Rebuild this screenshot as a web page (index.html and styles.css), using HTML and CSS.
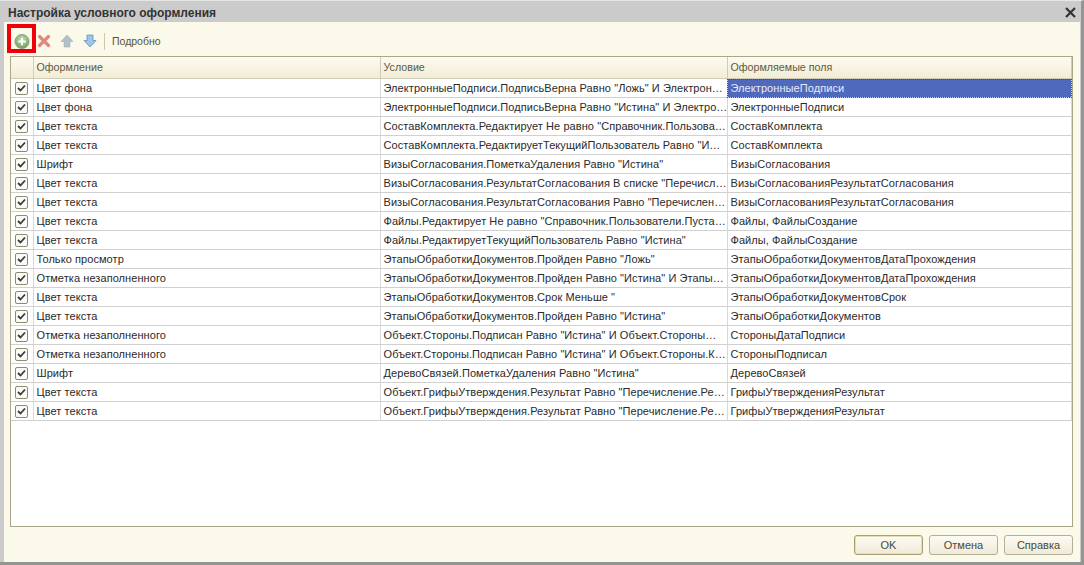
FILE: index.html
```html
<!DOCTYPE html>
<html lang="ru">
<head>
  <meta charset="UTF-8" />
  <meta name="viewport" content="width=device-width, initial-scale=1.0" />
  <title>Настройка условного оформления</title>
  <link rel="stylesheet" href="styles.css">
</head>
<body>
  <div class="window">
    <div class="titlebar">
      <div class="title">Настройка условного оформления</div>
      <svg class="close" width="11" height="11" viewBox="0 0 11 11"><path d="M1 1l9 9M10 1l-9 9" stroke="#333" stroke-width="2.2" fill="none"/></svg>
    </div>

    <div class="content">
      <div class="toolbar">
        <div class="marker"></div>
        <div class="tool tool-add">
          <svg width="17" height="17" viewBox="0 0 17 17">
            <defs><radialGradient id="g" cx="50%" cy="35%" r="65%"><stop offset="0" stop-color="#c6dfb2"/><stop offset="1" stop-color="#6f9f5c"/></radialGradient></defs>
            <circle cx="8.500" cy="8.500" r="7.500" fill="url(#g)" stroke="#86a67a"/>
            <path d="M8.500 4.500v8M4.500 8.500h8" stroke="#fff" stroke-width="2.200"/>
          </svg>
        </div>
        <div class="tool">
          <svg width="14" height="14" viewBox="0 0 14 14"><path d="M2.500 2.500l9 9M11.500 2.500l-9 9" stroke="#e08880" stroke-width="3.200" stroke-linecap="round"/></svg>
        </div>
        <div class="tool">
          <svg width="14" height="14" viewBox="0 0 14 14"><path d="M7 1l6 6.500h-3V13H4V7.500H1z" fill="#b4c0c8" stroke="#a5b2ba" stroke-width=".6"/></svg>
        </div>
        <div class="tool">
          <svg width="14" height="14" viewBox="0 0 14 14"><path d="M7 13L1 6.500h3V1h6v5.500h3z" fill="#9cc6ec" stroke="#5f8fbf" stroke-width=".8"/></svg>
        </div>
        <div class="divider"></div>
        <div class="tool-text">Подробно</div>
      </div>

      <div class="grid">
        <table>
          <colgroup>
            <col class="col-check">
            <col class="col-style">
            <col class="col-cond">
            <col>
          </colgroup>
          <thead>
            <tr><th></th><th>Оформление</th><th>Условие</th><th>Оформляемые поля</th></tr>
          </thead>
          <tbody id="rows"></tbody>
        </table>
      </div>

      <div class="buttons">
        <button class="btn btn-default">OK</button>
        <button class="btn">Отмена</button>
        <button class="btn">Справка</button>
      </div>
    </div>
  </div>

  <script>
    const rows = [
      ['Цвет фона', 'ЭлектронныеПодписи.ПодписьВерна Равно "Ложь" И Электрон…', 'ЭлектронныеПодписи'],
      ['Цвет фона', 'ЭлектронныеПодписи.ПодписьВерна Равно "Истина" И Электро…', 'ЭлектронныеПодписи'],
      ['Цвет текста', 'СоставКомплекта.Редактирует Не равно "Справочник.Пользова…', 'СоставКомплекта'],
      ['Цвет текста', 'СоставКомплекта.РедактируетТекущийПользователь Равно "И…', 'СоставКомплекта'],
      ['Шрифт', 'ВизыСогласования.ПометкаУдаления Равно "Истина"', 'ВизыСогласования'],
      ['Цвет текста', 'ВизыСогласования.РезультатСогласования В списке "Перечисл…', 'ВизыСогласованияРезультатСогласования'],
      ['Цвет текста', 'ВизыСогласования.РезультатСогласования Равно "Перечислен…', 'ВизыСогласованияРезультатСогласования'],
      ['Цвет текста', 'Файлы.Редактирует Не равно "Справочник.Пользователи.Пуста…', 'Файлы, ФайлыСоздание'],
      ['Цвет текста', 'Файлы.РедактируетТекущийПользователь Равно "Истина"', 'Файлы, ФайлыСоздание'],
      ['Только просмотр', 'ЭтапыОбработкиДокументов.Пройден Равно "Ложь"', 'ЭтапыОбработкиДокументовДатаПрохождения'],
      ['Отметка незаполненного', 'ЭтапыОбработкиДокументов.Пройден Равно "Истина" И Этапы…', 'ЭтапыОбработкиДокументовДатаПрохождения'],
      ['Цвет текста', 'ЭтапыОбработкиДокументов.Срок Меньше "', 'ЭтапыОбработкиДокументовСрок'],
      ['Цвет текста', 'ЭтапыОбработкиДокументов.Пройден Равно "Истина"', 'ЭтапыОбработкиДокументов'],
      ['Отметка незаполненного', 'Объект.Стороны.Подписан Равно "Истина" И Объект.Стороны…', 'СтороныДатаПодписи'],
      ['Отметка незаполненного', 'Объект.Стороны.Подписан Равно "Истина" И Объект.Стороны.К…', 'СтороныПодписал'],
      ['Шрифт', 'ДеревоСвязей.ПометкаУдаления Равно "Истина"', 'ДеревоСвязей'],
      ['Цвет текста', 'Объект.ГрифыУтверждения.Результат Равно "Перечисление.Ре…', 'ГрифыУтвержденияРезультат'],
      ['Цвет текста', 'Объект.ГрифыУтверждения.Результат Равно "Перечисление.Ре…', 'ГрифыУтвержденияРезультат']
    ];

    const check = '<span class="check"><svg width="9" height="8" viewBox="0 0 9 8"><path d="M1 4l2.500 2.500L8 1.500" stroke="#3a3a3a" stroke-width="1.800" fill="none"/></svg></span>';

    document.getElementById('rows').innerHTML = rows.map(function (r, i) {
      const selected = i === 0 ? ' class="selected"' : '';
      return '<tr><td class="cell-check">' + check + '</td><td>' + r[0] + '</td><td>' + r[1] + '</td><td' + selected + '>' + r[2] + '</td></tr>';
    }).join('');
  </script>
</body>
</html>
```

FILE: styles.css
```css
body {
  margin: 0;
  font-family: "Liberation Sans", Arial, sans-serif;
  font-size: 11px;
  color: #2a2a2a;
  overflow: hidden;
}

.window {
  box-sizing: border-box;
  height: 565px;
  display: flex;
  flex-direction: column;
  background-color: #cbcbcb;
  border-top: 1px solid #e6e6e6;
  border-right: 3px solid #949494;
  border-bottom: 3px solid #949494;
}

.titlebar {
  height: 21px;
  display: flex;
  align-items: center;
  justify-content: space-between;
  padding: 2px 5px 0 8px;
  box-sizing: border-box;
}

.title {
  font-size: 12px;
  font-weight: bold;
  color: #333;
}

.content {
  flex: 1;
  display: flex;
  flex-direction: column;
  margin: 0 1px 0 4px;
  background-color: #fbf9ea;
}

.toolbar {
  position: relative;
  height: 34px;
  box-sizing: border-box;
  display: flex;
  align-items: center;
  gap: 7px;
  padding: 4px 0 0 10px;
}

/* red annotation box over the add button */
.marker {
  position: absolute;
  left: 3px;
  top: 2px;
  box-sizing: border-box;
  width: 29px;
  height: 29px;
  border: 4px solid #f00008;
}

.tool {
  width: 16px;
  display: flex;
  align-items: center;
  justify-content: center;
}

.tool-add {
  margin-right: -1px;
}

.divider {
  width: 1px;
  height: 17px;
  margin-left: -1px;
  background-color: #cfc9a8;
}

.tool-text {
  font-size: 10.5px;
  color: #5a5433;
}

.grid {
  flex: 1;
  margin: 0 7px 0 6px;
  background-color: #fff;
  border: 1px solid #aaa68a;
}

table {
  width: 100%;
  border-collapse: collapse;
  table-layout: fixed;
}

.col-check {
  width: 22px;
}

.col-style,
.col-cond {
  width: 347px;
}

th {
  height: 19px;
  padding: 0 0 2px 3px;
  text-align: left;
  font-size: 10.7px;
  font-weight: normal;
  color: #5f5a3c;
  background: linear-gradient(#fdfbf0, #f1ecd6);
  border-right: 1px solid #cfcbb4;
  border-bottom: 1px solid #cfcbb4;
}

td {
  height: 18px;
  padding: 0 0 0 3px;
  letter-spacing: .07px;
  white-space: nowrap;
  overflow: hidden;
  border-right: 1px solid #d8d8d8;
  border-bottom: 1px solid #d0d0d0;
}

.cell-check {
  padding: 0 0 0 4px;
}

.check {
  box-sizing: border-box;
  width: 13px;
  height: 13px;
  display: flex;
  align-items: center;
  justify-content: center;
  border: 1px solid #8e8a72;
  border-radius: 2px;
  background-color: #fafaf6;
}

td.selected {
  color: #e8ecf8;
  background-color: #4f69bd;
  outline: 1px dotted #3c4a7c;
  outline-offset: -1px;
}

.buttons {
  height: 35px;
  box-sizing: border-box;
  display: flex;
  justify-content: flex-end;
  align-items: flex-start;
  gap: 6px;
  padding: 8px 7px 0 0;
}

.btn {
  width: 69px;
  height: 20px;
  padding: 0;
  font-family: inherit;
  font-size: 11px;
  color: #4d4a35;
  background: linear-gradient(#fdfcf3, #efeada);
  border: 1px solid #b5b092;
  border-radius: 3px;
}

.btn-default {
  border-color: #a8a070;
  box-shadow: inset 0 0 0 1px #e6dfb4;
}
```
